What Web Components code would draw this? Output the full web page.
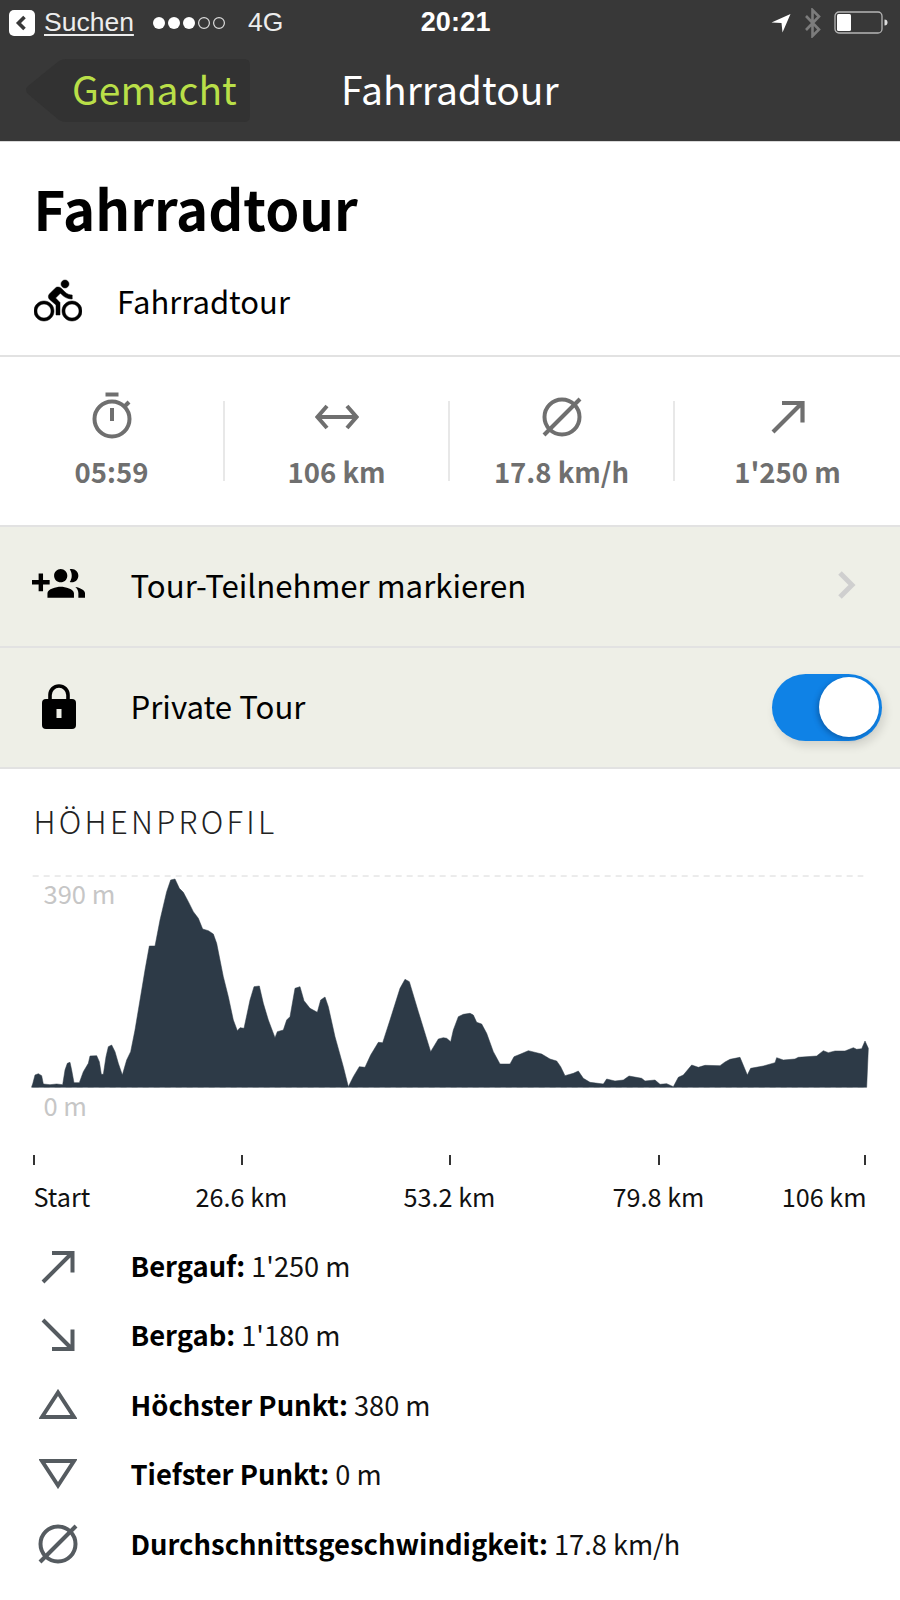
<!doctype html>
<html lang="de"><head><meta charset="utf-8"><title>Fahrradtour</title>
<style>
html,body{margin:0;background:#fff}
body{width:900px;height:1600px;overflow:hidden;font-family:"Noto Sans CJK JP","Source Sans Pro","Noto Sans",sans-serif;color:#000}
</style></head><body>
<tour-app></tour-app>
<template id="t-status"><style>
:host{display:flex;align-items:center;height:45px;background:#383838;color:#fff;font:26.5px "Liberation Sans",Arial,sans-serif;padding:0 12px 0 9px;box-sizing:border-box}
.l,.r{flex:1;display:flex;align-items:center}
.l{flex:1.036}
.r{justify-content:flex-end}
u{margin-left:9px;text-underline-offset:3px;color:#ededed;margin-top:-1px}
.sig{margin-left:18px;display:block}
.net{margin-left:20px;color:#ededed}
.t{font-weight:700;font-size:27px;letter-spacing:.2px}
svg{display:block}
</style>
<div class="l"><svg width="26" height="26" viewBox="0 0 26 26"><rect width="26" height="26" rx="5" fill="#fff"/><path d="M15.5 7l-6 6 6 6" fill="none" stroke="#383838" stroke-width="3.6"/></svg><u>Suchen</u>
<svg class="sig" width="76" height="14" viewBox="0 0 76 14"><g fill="#fff"><circle cx="7" cy="7" r="6"/><circle cx="22" cy="7" r="6"/><circle cx="37" cy="7" r="6"/></g><g fill="none" stroke="#ddd" stroke-width="1.2"><circle cx="52" cy="7" r="5.4"/><circle cx="67" cy="7" r="5.4"/></g></svg>
<span class="net">4G</span></div>
<div class="t">20:21</div>
<div class="r"><svg width="20" height="20" viewBox="0 0 20 20"><path d="M19.5 1L0.500 9.500l10 .5 1 9.500z" fill="#fff"/></svg>
<svg style="margin-left:13px" width="18" height="30" viewBox="0 0 18 30"><path d="M2 8l13 13.500-6.500 6.500V2l6.500 6.500L2 22" fill="none" stroke="#7c7c7c" stroke-width="2.600"/></svg>
<svg style="margin-left:12px" width="54" height="24" viewBox="0 0 54 24"><rect x="1" y="1" width="47" height="21" rx="4" fill="none" stroke="#b5b5b5" stroke-width="1.300"/><rect x="3" y="3" width="14" height="17" rx="1.500" fill="#fff"/><path d="M50.500 8.500a3 3 0 0 1 0 6z" fill="#ddd"/></svg></div>
</template>
<template id="t-nav"><style>
:host{display:flex;align-items:center;height:97px;background:#383838;padding:0 0 5px 26px;box-sizing:border-box;border-bottom:1px solid #d8d8d8}
.back{width:224px;height:63px;background:#323232;color:#b9df48;font-size:39px;line-height:59px;padding-left:46px;box-sizing:border-box;clip-path:path('M0 30 Q0 29 2 27 L33 2 Q36 0 40 0 L218 0 Q224 0 224 6 L224 57 Q224 63 218 63 L40 63 Q36 63 33 61 L2 35 Q0 33 0 30 Z')}
.title{color:#fff;font-size:39px;margin-left:91px;line-height:59px;padding-bottom:4px}
</style><div class="back"><slot name="back"></slot></div><div class="title"><slot></slot></div></template>
<template id="t-head"><style>
:host{display:block;height:215px;border-bottom:2px solid #e2e2e2;box-sizing:border-box;padding:0 33.5px}
h1{margin:0;font-size:54.5px;font-weight:700;line-height:70px;padding-top:31px}
.sport{display:flex;align-items:center;margin-top:34px;font-size:31px;line-height:44px}
svg{display:block;margin:0 35px 0 .5px;stroke:#000;stroke-width:.25}
</style><h1><slot name="title"></slot></h1><div class="sport"><svg width="48" height="48" viewBox="0 0 24 24"><path d="M15.500 5.500c1.100 0 2-.9 2-2s-.9-2-2-2-2 .9-2 2 .9 2 2 2zM5 12c-2.800 0-5 2.200-5 5s2.200 5 5 5 5-2.200 5-5-2.200-5-5-5zm0 8.500c-1.900 0-3.500-1.600-3.500-3.500s1.600-3.500 3.500-3.500 3.500 1.600 3.500 3.500-1.600 3.500-3.500 3.500zm5.800-10l2.400-2.400.8.8c1.300 1.300 3 2.100 5.100 2.100V9c-1.500 0-2.700-.6-3.600-1.500l-1.900-1.900c-.5-.4-1-.6-1.600-.6s-1.100.2-1.400.6L7.800 8.400c-.4.400-.6.900-.6 1.400 0 .6.200 1.100.6 1.400L11 14v5h2v-6.200l-2.200-2.300zM19 12c-2.800 0-5 2.200-5 5s2.200 5 5 5 5-2.200 5-5-2.200-5-5-5zm0 8.500c-1.900 0-3.500-1.600-3.500-3.500s1.600-3.500 3.500-3.500 3.500 1.600 3.500 3.500-1.600 3.500-3.500 3.500z"/></svg><slot></slot></div></template>
<template id="t-stats"><style>
:host{display:grid;grid-template-columns:repeat(4,225px);height:170px;box-sizing:border-box;padding-top:44px;border-bottom:2px solid #e2e2e2}
</style><slot></slot></template>
<template id="t-stat"><style>
:host{display:block;height:80px;box-sizing:border-box;border-right:2px solid #e8e8e8;text-align:center}
:host(:last-child){border-right:0}
.i{height:60px;margin-top:-14px;display:flex;justify-content:center;align-items:center;color:#6f6f6f}
.v{font-size:27.5px;font-weight:700;color:#6f6f6f;line-height:36px;margin-top:6px}
</style><div class="i"><slot name="icon"></slot></div><div class="v"><slot></slot></div></template>
<template id="t-row"><style>
:host{display:flex;align-items:center;height:121px;box-sizing:border-box;background:#eeefe7;border-bottom:2px solid #e2e2e2;font-size:31.2px;padding-bottom:4px}
.i{width:130.500px;flex:none;display:flex;justify-content:center;padding-right:13px;box-sizing:border-box}
.t{flex:1}
.e{display:flex;align-items:center}
</style><div class="i"><slot name="icon"></slot></div><div class="t"><slot></slot></div><div class="e"><slot name="end"></slot></div></template>
<template id="t-toggle"><style>
:host{display:block;width:110px;height:67px;margin:3px 18px 0 0;border-radius:34px;background:#0f82e6;position:relative;box-shadow:3px 5px 10px rgba(0,0,0,.12)}
.k{position:absolute;right:3px;top:3.500px;width:60px;height:60px;border-radius:50%;background:#fff;box-shadow:-2px 2px 5px rgba(0,40,90,.35)}
</style><div class="k"></div></template>
<template id="t-chart"><style>
:host{display:block;position:relative;color:#000}
h2{margin:0;padding:32px 0 0 33.5px;box-sizing:content-box;font-size:31px;font-weight:300;letter-spacing:3.300px;line-height:40px;color:#222;height:59px}
.plot{position:relative;height:240px}
svg.c{display:block;margin-left:20px}
.y{position:absolute;left:43.500px;font-size:25.500px;color:#c6c6c6;line-height:32px}
.y.a{top:17px}.y.b{top:229px}
.ticks{display:flex;justify-content:space-between;padding:0 34px 0 33px;margin-top:55px}
.ticks i{width:2px;height:10px;background:#333;display:block}
.ticks i:nth-child(4){transform:translateX(2px)}
.labels{display:grid;grid-template-columns:104px 208px 208px 210px 103px;padding:0 33.500px;margin-top:13px;font-size:25.200px;line-height:36px;text-align:center;color:#111}
.labels span:first-child{text-align:left}
.labels span:last-child{text-align:right}
</style><h2><slot name="title"></slot></h2>
<div class="plot"><svg class="c" width="880" height="240" viewBox="0 0 2640 720">
<path d="M38 48H2530" fill="none" stroke="#d8d8d8" stroke-width="3" stroke-dasharray="18 15"/>
<path d="M38 682H2544" fill="none" stroke="#d8d8d8" stroke-width="3" stroke-dasharray="18 15"/>
<path fill="#2d3a47" stroke="#2d3a47" stroke-width="1.500" stroke-linejoin="round" d="M35 680L38 672 45 645 55 641 65 647 70 672 90 674 110 672 128 674 135 630 142 610 150 607 155 630 162 668 178 668 190 635 205 610 210 588 230 587 238 605 244 643 250 643 258 590 265 560 275 555 285 575 295 610 307 645 320 600 332 575 345 510 360 420 375 330 388 258 405 258 420 180 440 95 452 60 465 57 478 85 490 97 505 125 520 155 535 175 548 207 565 212 580 222 590 250 610 350 625 410 640 480 652 512 660 503 672 505 690 420 702 380 718 378 730 430 745 480 765 533 772 515 790 510 800 480 810 470 825 385 840 380 852 422 870 445 892 457 902 420 915 411 925 440 945 530 970 620 985 680 1000 650 1018 620 1035 622 1052 585 1075 547 1088 548 1110 480 1140 385 1155 358 1168 365 1195 455 1232 575 1255 537 1270 533 1280 535 1292 545 1300 510 1315 470 1330 463 1350 460 1360 465 1370 487 1385 492 1400 520 1420 575 1440 612 1470 612 1482 590 1500 583 1525 572 1565 582 1590 597 1610 603 1622 620 1635 647 1660 640 1675 633 1690 655 1710 667 1750 672 1760 657 1785 663 1810 660 1827 648 1865 655 1875 663 1905 660 1920 673 1940 671 1960 680 1975 652 1990 645 2015 615 2035 622 2055 616 2100 617 2115 606 2130 598 2160 592 2182 645 2192 625 2230 618 2265 608 2270 593 2290 600 2325 597 2335 592 2390 588 2410 572 2425 578 2445 573 2475 573 2500 563 2510 568 2525 566 2535 543 2545 565 2540 682 35 682Z"/></svg>
<div class="y a">390 m</div><div class="y b">0 m</div></div>
<div class="ticks"><i></i><i></i><i></i><i></i><i></i></div>
<div class="labels"><span>Start</span><span>26.6 km</span><span>53.2 km</span><span>79.8 km</span><span>106 km</span></div></template>
<template id="t-facts"><style>
:host{display:block;padding-top:16px}
</style><slot></slot></template>
<template id="t-fact"><style>
:host{display:flex;align-items:center;height:69.500px;font-size:27.200px;color:#111}
.i{width:130.500px;flex:none;display:flex;justify-content:center;padding-right:14px;box-sizing:border-box;color:#555b60}
b{font-weight:700;color:#000;font-size:27.400px}
</style><div class="i"><slot name="icon"></slot></div><div><b><slot name="k"></slot></b> <slot></slot></div></template>
<template id="t-app"><style>
:host{display:block;width:900px}
svg{display:block}
</style>
<status-bar></status-bar>
<nav-bar><span slot="back">Gemacht</span>Fahrradtour</nav-bar>
<tour-head><span slot="title">Fahrradtour</span>Fahrradtour</tour-head>
<stat-grid>
<stat-item><svg slot="icon" style="margin-bottom:3px" width="44" height="48" viewBox="0 0 44 48" fill="none" stroke="currentColor" stroke-width="4"><path d="M15.500 2.500h13"/><circle cx="22" cy="27" r="17.500"/><path d="M22 16v13" stroke-width="4"/><path d="M35 14l4-4"/></svg>05:59</stat-item>
<stat-item><svg slot="icon" width="44" height="28" viewBox="0 0 44 28" fill="none" stroke="currentColor" stroke-width="4"><path d="M2 14h40M12 3L2.500 14 12 25M32 3l9.500 11L32 25"/></svg>106 km</stat-item>
<stat-item><svg slot="icon" width="40" height="42" viewBox="0 0 40 42" fill="none" stroke="currentColor" stroke-width="4"><circle cx="20" cy="21" r="17.500"/><path d="M2 39L38 3"/></svg>17.8 km/h</stat-item>
<stat-item><svg slot="icon" width="34" height="34" viewBox="0 0 34 34" fill="none" stroke="currentColor" stroke-width="4.200"><path d="M2 32L31 3M11 3h20.500v19.500"/></svg>1'250 m</stat-item>
</stat-grid>
<tour-row><svg slot="icon" width="53" height="53" viewBox="0 0 24 24"><path d="M8 10H5V7H3v3H0v2h3v3h2v-3h3v-2zm10 1c1.660 0 2.990-1.340 2.990-3S19.660 5 18 5c-.32 0-.63.050-.91.140.57.810.9 1.790.9 2.860s-.34 2.040-.9 2.860c.28.090.59.140.91.140zm-5 0c1.660 0 2.990-1.340 2.990-3S14.660 5 13 5s-3 1.340-3 3 1.340 3 3 3zm6.620 2.160c.83.730 1.380 1.660 1.380 2.840v2h3v-2c0-1.540-2.370-2.490-4.380-2.840zM13 13c-2 0-6 1-6 3v2h12v-2c0-2-4-3-6-3z"/></svg>Tour-Teilnehmer markieren<svg slot="end" style="margin-right:43px" width="20" height="28" viewBox="0 0 20 28"><path d="M3 2l12 12L3 26" fill="none" stroke="#cfcfcf" stroke-width="5"/></svg></tour-row>
<tour-row><svg slot="icon" width="36" height="46" viewBox="0 0 36 46"><path d="M9 18v-6a9 9 0 0 1 18 0v6" fill="none" stroke="#000" stroke-width="3.600"/><rect x="1" y="16" width="34" height="30" rx="4"/><rect x="15.500" y="26" width="5" height="9" fill="#eeefe7"/></svg>Private Tour<tour-toggle slot="end"></tour-toggle></tour-row>
<elevation-chart><span slot="title">HÖHENPROFIL</span></elevation-chart>
<fact-list>
<fact-row><svg slot="icon" style="margin-top:4px" width="34" height="34" viewBox="0 0 34 34" fill="none" stroke="currentColor" stroke-width="4"><path d="M2 32L31 3M11 3h20.500v19.500"/></svg><span slot="k">Bergauf:</span>1'250 m</fact-row>
<fact-row><svg slot="icon" style="margin-top:2px" width="34" height="34" viewBox="0 0 34 34" fill="none" stroke="currentColor" stroke-width="4"><path d="M2 2l29 29M11 31h20.500V11.500"/></svg><span slot="k">Bergab:</span>1'180 m</fact-row>
<fact-row><svg slot="icon" width="38" height="30" viewBox="0 0 38 30" fill="none" stroke="currentColor" stroke-width="4"><path d="M19 3.500L3 28h32z"/></svg><span slot="k">Höchster Punkt:</span>380 m</fact-row>
<fact-row><svg slot="icon" style="margin-top:2px" width="38" height="30" viewBox="0 0 38 30" fill="none" stroke="currentColor" stroke-width="4"><path d="M19 26.500L3 2h32z"/></svg><span slot="k">Tiefster Punkt:</span>0 m</fact-row>
<fact-row><svg slot="icon" style="margin-top:3px" width="40" height="42" viewBox="0 0 40 42" fill="none" stroke="currentColor" stroke-width="4"><circle cx="20" cy="21" r="17.500"/><path d="M2 39L38 3"/></svg><span slot="k">Durchschnittsgeschwindigkeit:</span>17.8 km/h</fact-row>
</fact-list>
</template>
<script>
const map={'status-bar':'t-status','nav-bar':'t-nav','tour-head':'t-head','stat-grid':'t-stats','stat-item':'t-stat','tour-row':'t-row','tour-toggle':'t-toggle','elevation-chart':'t-chart','fact-list':'t-facts','fact-row':'t-fact','tour-app':'t-app'};
for(const [n,t] of Object.entries(map)){
  customElements.define(n,class extends HTMLElement{constructor(){super();this.attachShadow({mode:'open'}).appendChild(document.getElementById(t).content.cloneNode(true));}});
}
</script>
</body></html>
